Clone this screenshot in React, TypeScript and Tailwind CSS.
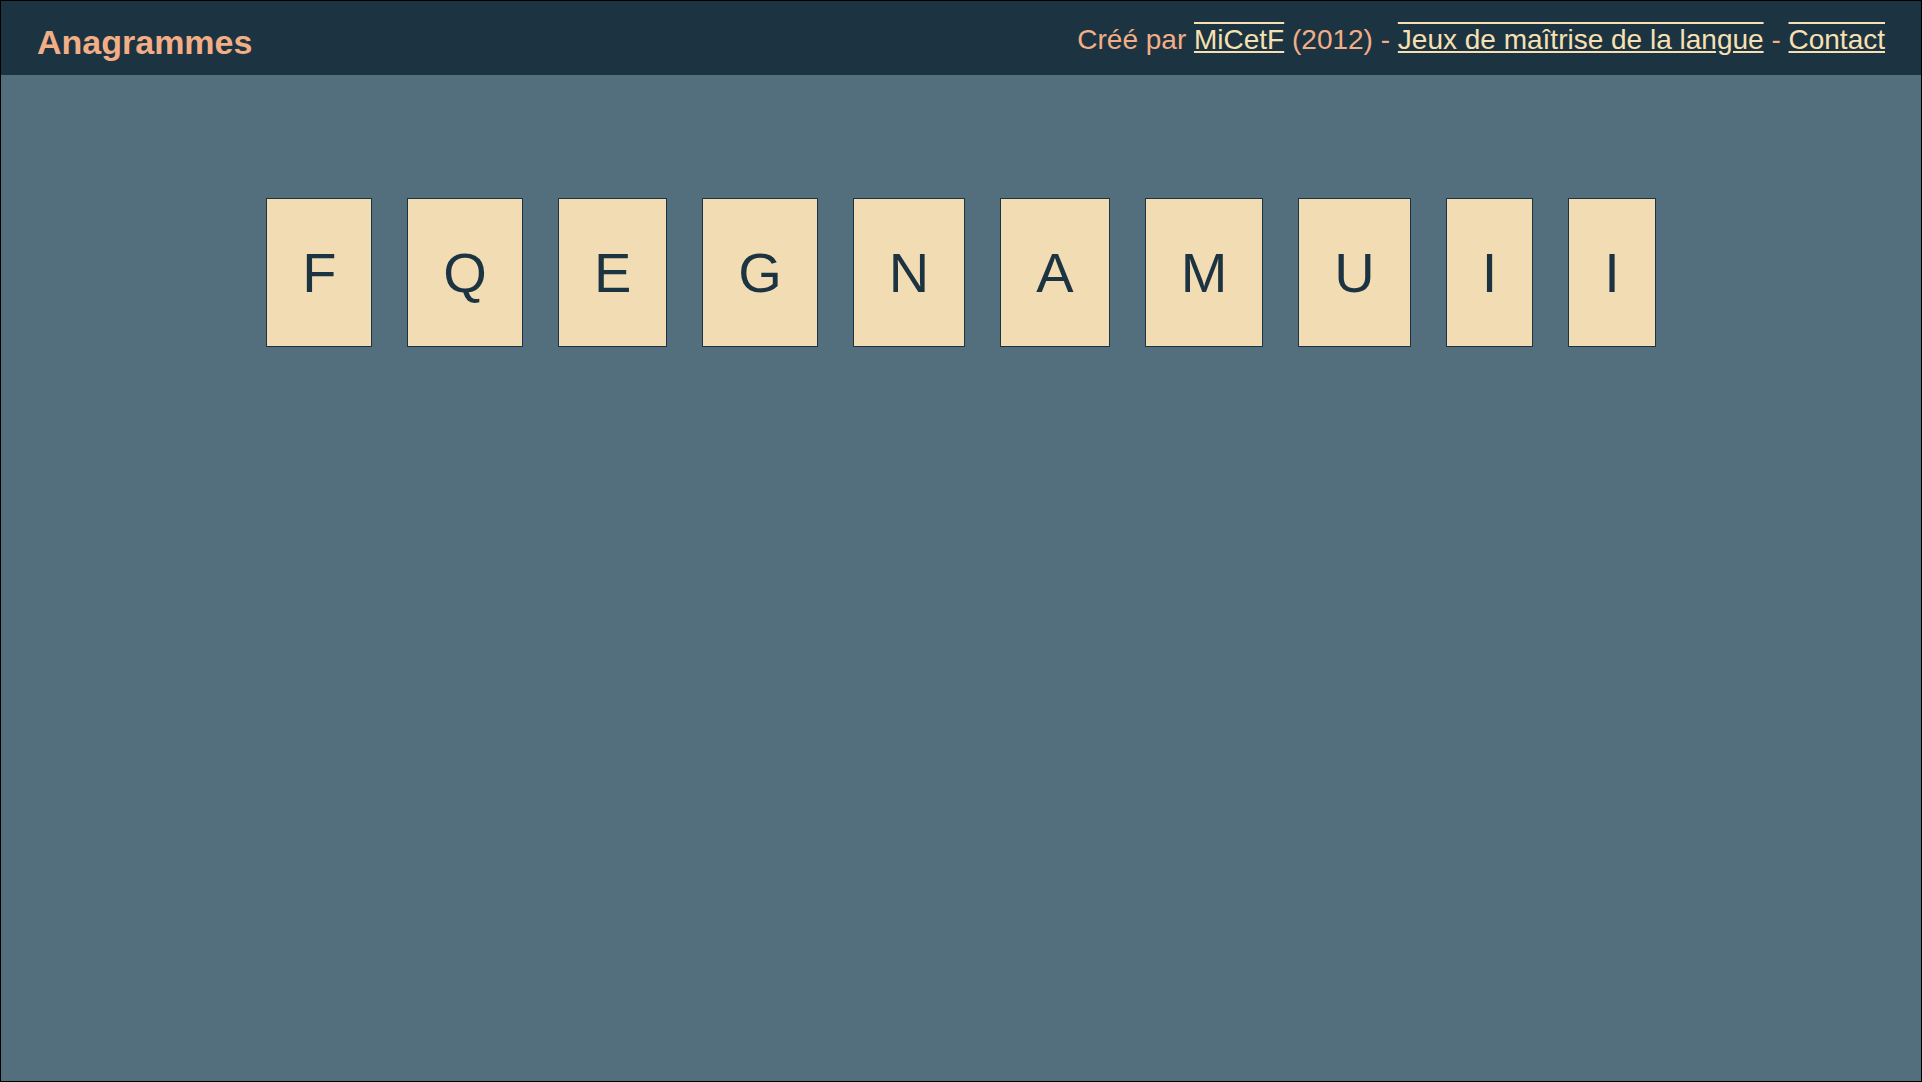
// Anagram game board: header plus a row of letter tiles

const LETTERS = ['F', 'Q', 'E', 'G', 'N', 'A', 'M', 'U', 'I', 'I'];

const linkCls =
  'text-[#f7e0b2] [text-decoration-line:underline_overline] decoration-[#f7e0b2]';

export default function App() {
  return (
    <div
      className="h-screen flex flex-col border border-black bg-[#536f7d]"
      style={{ fontFamily: '"Liberation Sans", Arial, sans-serif' }}
    >
      {/* Header */}
      <header className="h-[74px] shrink-0 flex items-start justify-between bg-[#1c3341] px-9 pt-[22px]">
        <h1 className="text-[34px] font-bold leading-[normal] text-[#f2ae87]">Anagrammes</h1>
        <div className="pt-px text-[28px] leading-[normal] text-[#f2ae87]">
          Créé par <a className={linkCls}>MiCetF</a> (2012) -{' '}
          <a className={linkCls}>Jeux de maîtrise de la langue</a> -{' '}
          <a className={linkCls}>Contact</a>
        </div>
      </header>

      {/* Tiles */}
      <main className="flex-1 pt-[123px]">
        <div className="flex justify-center gap-[35px]">
          {LETTERS.map((letter, i) => (
            <div
              key={i}
              className="h-[149px] flex items-center px-[35px] bg-[#f2dcb3] border border-[#1c3341] text-[56px] leading-[normal] text-[#1c3341]"
            >
              {letter}
            </div>
          ))}
        </div>
      </main>
    </div>
  );
}
